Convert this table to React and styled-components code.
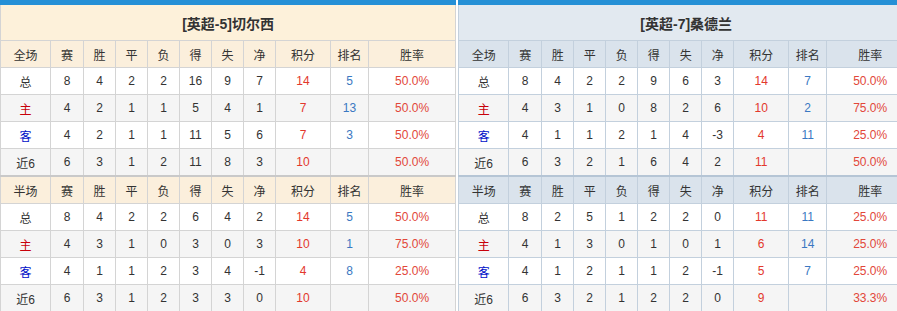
import React from "react";
import styled, { createGlobalStyle, css } from "styled-components";

const GlobalStyle = createGlobalStyle`
  html, body {
    margin: 0;
    padding: 0;
    background: #fff;
    overflow: hidden;
  }
  body {
    font-family: "Liberation Sans", "Noto Sans CJK SC", sans-serif;
    font-size: 12px;
    color: #333;
  }
`;

const themes = {
  home: {
    title: "#fdf1da",
    head: "#fbefdc",
    line: "#d4d4d4",
    thick: "#c9c9c9",
  },
  away: {
    title: "#e2e9f0",
    head: "#dae3ec",
    line: "#c3d0dd",
    thick: "#b5c5d5",
  },
};

const widths = [50, 33, 32, 32, 32, 32, 32, 32, 55, 38, 87];

const teams = [
  {
    side: "home",
    name: "[英超-5]切尔西",
    full: [
      ["总", 8, 4, 2, 2, 16, 9, 7, 14, 5, "50.0%"],
      ["主", 4, 2, 1, 1, 5, 4, 1, 7, 13, "50.0%"],
      ["客", 4, 2, 1, 1, 11, 5, 6, 7, 3, "50.0%"],
      ["近6", 6, 3, 1, 2, 11, 8, 3, 10, "", "50.0%"],
    ],
    half: [
      ["总", 8, 4, 2, 2, 6, 4, 2, 14, 5, "50.0%"],
      ["主", 4, 3, 1, 0, 3, 0, 3, 10, 1, "75.0%"],
      ["客", 4, 1, 1, 2, 3, 4, -1, 4, 8, "25.0%"],
      ["近6", 6, 3, 1, 2, 3, 3, 0, 10, "", "50.0%"],
    ],
  },
  {
    side: "away",
    name: "[英超-7]桑德兰",
    full: [
      ["总", 8, 4, 2, 2, 9, 6, 3, 14, 7, "50.0%"],
      ["主", 4, 3, 1, 0, 8, 2, 6, 10, 2, "75.0%"],
      ["客", 4, 1, 1, 2, 1, 4, -3, 4, 11, "25.0%"],
      ["近6", 6, 3, 2, 1, 6, 4, 2, 11, "", "50.0%"],
    ],
    half: [
      ["总", 8, 2, 5, 1, 2, 2, 0, 11, 11, "25.0%"],
      ["主", 4, 1, 3, 0, 1, 0, 1, 6, 14, "25.0%"],
      ["客", 4, 1, 2, 1, 1, 2, -1, 5, 7, "25.0%"],
      ["近6", 6, 3, 2, 1, 2, 2, 0, 9, "", "33.3%"],
    ],
  },
];

const headers = ["赛", "胜", "平", "负", "得", "失", "净", "积分", "排名", "胜率"];

const Page = styled.div`
  display: flex;
  gap: 2px;
  width: 912px;
`;

const Table = styled.table`
  width: 455px;
  table-layout: fixed;
  border-collapse: collapse;
  border-top: 5px solid #2590d6;
`;

const TitleCell = styled.th`
  height: 35px;
  padding: 0;
  background: ${(p) => themes[p.$side].title};
  border: 1px solid ${(p) => themes[p.$side].line};
  border-top: none;
  font-size: 14px;
  font-weight: bold;
  color: #333;
  text-align: center;
`;

const HeadRow = styled.tr`
  background: ${(p) => themes[p.$side].head};
  ${(p) =>
    p.$split &&
    css`
      border-top: 2px solid ${themes[p.$side].thick};
    `}
`;

const HeadCell = styled.th`
  height: 26px;
  padding: 0;
  font-weight: normal;
  color: #333;
  text-align: center;
  border: 1px solid ${(p) => themes[p.$side].line};
`;

const Row = styled.tr`
  background: ${(p) => (p.$odd ? "#f5f5f5" : "#fff")};
`;

const toneColor = {
  plain: "#333",
  home: "#c8000a",
  away: "#0010c8",
  points: "#e3382c",
  rank: "#3a78c2",
  rate: "#e2473a",
};

const Cell = styled.td`
  height: 26px;
  padding: 0;
  text-align: center;
  color: ${(p) => toneColor[p.$tone || "plain"]};
  border: 1px solid ${(p) => themes[p.$side].line};
`;

function labelTone(label) {
  if (label === "主") return "home";
  if (label === "客") return "away";
  return "plain";
}

function StatRows({ rows, side }) {
  return rows.map((r, i) => (
    <Row key={i} $odd={i % 2 === 1}>
      {r.map((v, j) => {
        let tone = "plain";
        if (j === 0) tone = labelTone(v);
        else if (j === 8) tone = "points";
        else if (j === 9) tone = "rank";
        else if (j === 10) tone = "rate";
        return (
          <Cell key={j} $side={side} $tone={tone}>
            {v}
          </Cell>
        );
      })}
    </Row>
  ));
}

function HeaderRow({ side, first, split }) {
  return (
    <HeadRow $side={side} $split={split}>
      <HeadCell $side={side}>{first}</HeadCell>
      {headers.map((h) => (
        <HeadCell key={h} $side={side}>
          {h}
        </HeadCell>
      ))}
    </HeadRow>
  );
}

function TeamTable({ team }) {
  const side = team.side;
  return (
    <Table>
      <colgroup>
        {widths.map((w, i) => (
          <col key={i} style={{ width: w }} />
        ))}
      </colgroup>
      <tbody>
        <tr>
          <TitleCell colSpan={11} $side={side}>
            {team.name}
          </TitleCell>
        </tr>
        <HeaderRow side={side} first="全场" />
        <StatRows rows={team.full} side={side} />
        <HeaderRow side={side} first="半场" split />
        <StatRows rows={team.half} side={side} />
      </tbody>
    </Table>
  );
}

export default function App() {
  return (
    <>
      <GlobalStyle />
      <Page>
        {teams.map((t) => (
          <TeamTable key={t.side} team={t} />
        ))}
      </Page>
    </>
  );
}
